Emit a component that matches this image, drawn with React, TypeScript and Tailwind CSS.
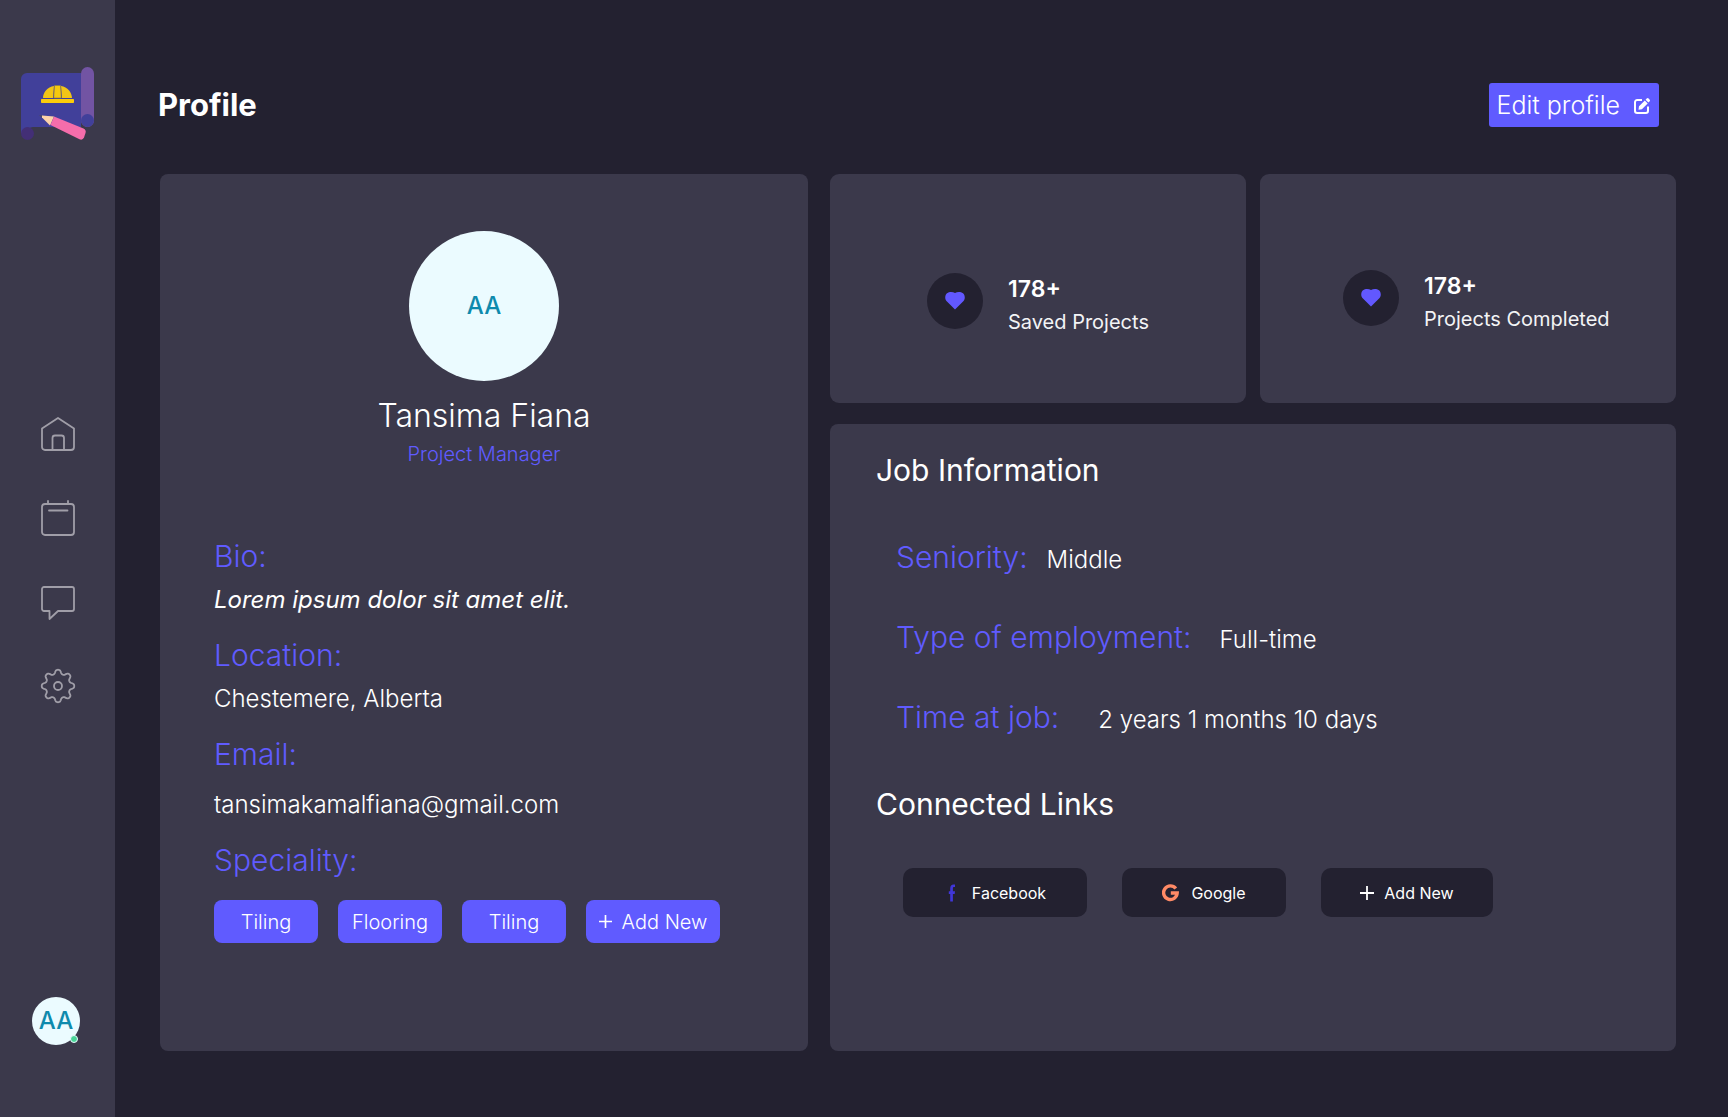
import type { ReactNode } from "react";

const FONT = "font-['Inter',sans-serif]";

function Logo() {
  return (
    <svg className="h-[74px] w-[74px]" viewBox="0 0 74 74" role="img" aria-label="Blueprint">
      <path d="M0 12a6 6 0 0 1 6-6h54v54H12a6 6 0 0 0-6 6H0z" fill="#41409a" />
      <rect x="0" y="60" width="13" height="13" rx="6.5" fill="#432f76" />
      <rect x="60" y="0" width="13" height="60" rx="6.5" fill="#7254a3" />
      <circle cx="66.500" cy="53.500" r="6.500" fill="#41409a" />
      <path d="M22 31c0-5.500 4.500-11 11-12l-1 12zM51 31c0-5.500-4.500-11-11-12l1 12z" fill="#f1c516" />
      <path d="M33.500 18.500h6l.7 12.500h-7.400z" fill="#f5c90f" stroke="#8b7a45" strokeWidth=".6" />
      <rect x="20" y="32" width="33" height="4" rx=".8" fill="#fccc0a" />
      <path d="M18 48l4 .5-1 2.500z" fill="#4b4a63" />
      <path d="M21 48.500l12 1-4 9-8-8z" fill="#fdd3a9" />
      <path d="M33 49.500l29.500 12q3 1.500 2 4.500l-1.500 4.500q-1.300 3-4.500 1.800L29.500 58z" fill="#f56dab" />
    </svg>
  );
}

function NavIcon({ children }: { children: ReactNode }) {
  return (
    <svg className="h-9 w-9" viewBox="0 0 36 36" fill="none" stroke="#a09ea8" strokeWidth="1.8" strokeLinecap="round" strokeLinejoin="round">
      {children}
    </svg>
  );
}

const gearPath = (() => {
  const points: string[] = [];
  for (let i = 0; i <= 144; i++) {
    const a = (i / 144) * Math.PI * 2;
    const c = Math.cos(8 * a);
    const r = 14.3 + 1.9 * Math.tanh(1.6 * c) + 0.2 * c;
    points.push(`${(18 + r * Math.sin(a)).toFixed(2)} ${(18 - r * Math.cos(a)).toFixed(2)}`);
  }
  return `M${points.join("L")}Z`;
})();

const nav = [
  {
    label: "Home",
    icon: (
      <>
        <path d="M2 12.500 18 2l16 10.500V31a3 3 0 0 1-3 3H5a3 3 0 0 1-3-3z" />
        <path d="M12.500 34V22a2.500 2.500 0 0 1 2.500-2.500h6.500A2.500 2.500 0 0 1 24 22v12" />
      </>
    ),
  },
  {
    label: "Calendar",
    icon: (
      <>
        <rect x="2" y="4" width="32" height="31" rx="3" />
        <path d="M8 1v2.500M28 1v2.500M9 10.500h18.500" />
      </>
    ),
  },
  {
    label: "Messages",
    icon: <path d="M4 3h28a2 2 0 0 1 2 2v20a2 2 0 0 1-2 2H18l-8.500 8V27H4a2 2 0 0 1-2-2V5a2 2 0 0 1 2-2z" />,
  },
  {
    label: "Settings",
    icon: (
      <>
        <path d={gearPath} />
        <circle cx="18" cy="18" r="4" />
      </>
    ),
  },
];

function Plus({ className }: { className: string }) {
  return (
    <svg className={className} viewBox="0 0 14 14" fill="none" stroke="currentColor" strokeWidth="1.8" aria-hidden="true">
      <path d="M7 0v14M0 7h14" />
    </svg>
  );
}

function EditIcon() {
  return (
    <svg className="h-4 w-4" viewBox="0 0 16 16" aria-hidden="true">
      <path d="M8 2H3.200A2.200 2.200 0 0 0 1 4.200v8.600A2.200 2.200 0 0 0 3.200 15h8.600a2.200 2.200 0 0 0 2.200-2.200V8.500" fill="none" stroke="#fff" strokeWidth="2" />
      <path d="M4.500 11.800l.5-3.500L10.800 2.500l2.900 2.900-5.800 5.800zM11.600 1.700l1.100-1.100a1.300 1.300 0 0 1 1.900 0l.9.9a1.300 1.300 0 0 1 0 1.900l-1.100 1.100z" fill="#fff" />
    </svg>
  );
}

function Stat({ value, label, className }: { value: string; label: string; className: string }) {
  return (
    <section className={`flex h-[229px] items-start rounded-[9px] bg-[#3b394b] ${className}`}>
      <span className="flex h-14 w-14 shrink-0 items-center justify-center rounded-full bg-[#232130]">
        <svg className="h-5 w-5" viewBox="0 0 20 20" fill="#6258ff" aria-hidden="true">
          <path d="M10 18.600 1.700 10.300C-.6 8 0 4 2 2.300 4.400.4 7.800.7 10 2 12.200.7 15.600.4 18 2.300c2 1.700 2.600 5.700.3 8z" />
        </svg>
      </span>
      <div className="ml-[25px] whitespace-nowrap">
        <p className="text-[23px] leading-8 font-semibold">{value}</p>
        <p className="mt-[3px] text-xl leading-7 text-gray-100">{label}</p>
      </div>
    </section>
  );
}

function Field({ label, children, className }: { label: string; children: ReactNode; className: string }) {
  return (
    <div>
      <dt className="text-[30px] leading-9 font-light text-[#605bff]">{label}</dt>
      <dd className={`text-2xl leading-8 ${className}`}>{children}</dd>
    </div>
  );
}

function JobRow({ label, value, className }: { label: string; value: string; className: string }) {
  return (
    <div className={`flex items-baseline ${className}`}>
      <dt className="text-[30px] leading-9 font-light text-[#605bff]">{label}</dt>
      <dd className="text-2xl leading-7 font-light">{value}</dd>
    </div>
  );
}

const chip = "h-[43px] rounded-lg bg-[#605bff] text-xl font-light";
const link = "flex h-[49px] items-center justify-center rounded-[10px] bg-[#232130] text-base text-white";

export default function App() {
  return (
    <div className={`flex min-h-screen bg-[#232130] text-white ${FONT}`}>
      <aside className="flex w-[115px] shrink-0 flex-col items-center bg-[#3b394b] pt-[67px] pb-[72px]">
        <Logo />
        <nav className="mt-[275px] flex flex-col gap-12">
          {nav.map((item) => (
            <a key={item.label} href="#" aria-label={item.label}>
              <NavIcon>{item.icon}</NavIcon>
            </a>
          ))}
        </nav>
        <div className="relative mt-auto mr-[3px] flex h-12 w-12 items-center justify-center rounded-full bg-[#ebfbff] text-2xl font-medium text-[#0e8aad]">
          AA
          <span className="absolute right-0.5 bottom-0.5 h-2 w-2 rounded-full border border-[#ebfbff] bg-[#48d597]" />
        </div>
      </aside>

      <main className="flex min-w-0 grow flex-col pt-[83px] pr-[52px] pb-[66px] pl-[45px]">
        <header className="flex items-center justify-between pr-[17px]">
          <h1 className="-ml-0.5 text-[31px] leading-10 font-bold">Profile</h1>
          <button type="button" className="flex h-11 items-center gap-3.5 rounded-[3px] bg-[#605bff] pt-0.5 pr-[9px] pl-2 text-[25px] font-light">
            Edit profile
            <EditIcon />
          </button>
        </header>

        <div className="mt-[47px] grid grow grid-cols-[648fr_846fr] gap-[22px]">
          <section className="rounded-lg bg-[#3b394b] px-[54px] pt-[57px]">
            <div className="flex flex-col items-center">
              <span className="flex h-[150px] w-[150px] items-center justify-center rounded-full bg-[#ebfbff] text-2xl font-medium text-[#0e8aad]">
                AA
              </span>
              <h2 className="mt-[15px] text-[32px] leading-10 font-light">Tansima Fiana</h2>
              <p className="mt-1 text-xl leading-7 font-light text-[#605bff]">Project Manager</p>
            </div>
            <dl className="mt-[70px] flex flex-col gap-[21px]">
              <Field label="Bio:" className="mt-2.5 italic">Lorem ipsum dolor sit amet elit.</Field>
              <Field label="Location:" className="mt-2.5 font-light">Chestemere, Alberta</Field>
              <Field label="Email:" className="mt-[17px] font-light">tansimakamalfiana@gmail.com</Field>
              <Field label="Speciality:" className="mt-[22px]">
                <div className="flex gap-5">
                  <button type="button" className={`w-[104px] ${chip}`}>Tiling</button>
                  <button type="button" className={`w-[104px] ${chip}`}>Flooring</button>
                  <button type="button" className={`w-[104px] ${chip}`}>Tiling</button>
                  <button type="button" className={`flex w-[134px] items-center justify-center gap-2.5 ${chip}`}>
                    <Plus className="h-[13px] w-[13px]" />
                    Add New
                  </button>
                </div>
              </Field>
            </dl>
          </section>

          <div className="flex flex-col gap-[21px]">
            <div className="grid grid-cols-2 gap-3.5">
              <Stat value="178+" label="Saved Projects" className="pt-[99px] pl-[97px]" />
              <Stat value="178+" label="Projects Completed" className="pt-24 pl-[83px]" />
            </div>
            <section className="grow rounded-lg bg-[#3b394b] pt-7 pr-8 pl-[46px]">
              <h2 className="text-[30px] leading-9">Job Information</h2>
              <dl className="mt-[51px] flex flex-col gap-11 pl-5">
                <JobRow label="Seniority:" value="Middle" className="gap-[19px]" />
                <JobRow label="Type of employment:" value="Full-time" className="gap-7" />
                <JobRow label="Time at job:" value="2 years 1 months 10 days" className="gap-[39px]" />
              </dl>
              <h2 className="mt-[51px] text-[30px] leading-9">Connected Links</h2>
              <div className="mt-[46px] flex gap-[35px] pl-[27px]">
                <a href="#" className={`w-[184px] gap-4 pl-1 ${link}`}>
                  <svg className="h-[18px] w-2" viewBox="0 0 8 18" fill="#4036d8" aria-hidden="true">
                    <path d="M2.200 17.500V10H.8V7.200h1.400V4.500C2.200 1.800 3.500.5 5.600.5H7V3H6.200C5.300 3 4.900 3.500 4.900 4.300v2.900H7L6.700 10H4.900v7.500z" />
                  </svg>
                  Facebook
                </a>
                <a href="#" className={`w-[164px] gap-3 ${link}`}>
                  <svg className="h-[18px] w-[17px]" viewBox="0 0 17 18" fill="none" stroke="#ff8a66" strokeWidth="3.400" aria-hidden="true">
                    <path d="M13.800 4.500A6.800 6.800 0 1 0 15.200 9H8.800" />
                  </svg>
                  Google
                </a>
                <button type="button" className={`w-[172px] gap-2.5 ${link}`}>
                  <Plus className="h-3.5 w-3.5" />
                  Add New
                </button>
              </div>
            </section>
          </div>
        </div>
      </main>
    </div>
  );
}
